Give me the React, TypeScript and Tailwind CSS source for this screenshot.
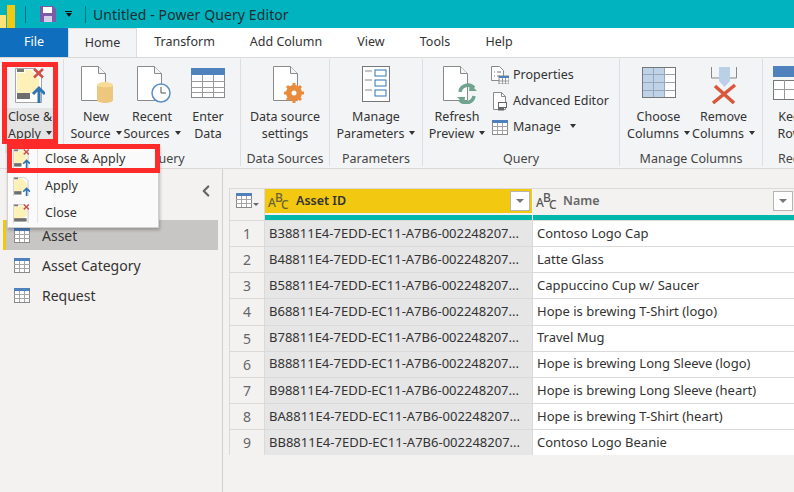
import { ChevronLeft } from 'lucide-react';

const rows = [
  ['B38811E4', 'Contoso Logo Cap'],
  ['B48811E4', 'Latte Glass'],
  ['B58811E4', 'Cappuccino Cup w/ Saucer'],
  ['B68811E4', 'Hope is brewing T-Shirt (logo)'],
  ['B78811E4', 'Travel Mug'],
  ['B88811E4', 'Hope is brewing Long Sleeve (logo)'],
  ['B98811E4', 'Hope is brewing Long Sleeve (heart)'],
  ['BA8811E4', 'Hope is brewing T-Shirt (heart)'],
  ['BB8811E4', 'Contoso Logo Beanie'],
];

function Caret() {
  return <span className="inline-block ml-[5px] mb-[3px] border-x-[3.5px] border-t-[4px] border-x-transparent border-t-[#333]" />;
}

function TableIcon() {
  return (
    <svg width="34" height="30" viewBox="0 0 34 30">
      <rect x="0.5" y="0.5" width="33" height="29" fill="#fff" stroke="#8a8a8a" />
      <rect x="0" y="0" width="34" height="7" fill="#4f81bd" />
      <path d="M11.5 7v22M22.5 7v22M0 13.5h34M0 19.5h34M0 24.5h34" stroke="#9a9a9a" fill="none" />
    </svg>
  );
}

function SmallTable() {
  return (
    <svg width="16" height="15" viewBox="0 0 16 15" className="shrink-0">
      <rect x="0.5" y="0.5" width="15" height="14" fill="#fff" stroke="#8a8a8a" />
      <rect x="0" y="0" width="16" height="3" fill="#4f81bd" />
      <path d="M5.5 3v11M10.5 3v11M0 6.5h16M0 10.5h16" stroke="#a5a5a5" fill="none" />
    </svg>
  );
}

// page with a folded corner; whatever sits on it may hang over its edge
function Doc({ children }: { children?: React.ReactNode }) {
  return (
    <svg width="36" height="38" viewBox="0 0 36 38">
      <path d="M.5 .5h17l7 7v27h-24z" fill="#fff" stroke="#8a8a8a" />
      <path d="M17.5 .5v7h7" fill="#f3f4f6" stroke="#8a8a8a" />
      {children}
    </svg>
  );
}

function CloseApplyIcon({ w = 30, close = true, apply = true }: { w?: number; close?: boolean; apply?: boolean }) {
  return (
    <svg width={w} height={(w * 35) / 30} viewBox="0 0 30 35" className="shrink-0">
      <path d="M.5 .5h20l6 6v28h-26z" fill="#fff" stroke="#a5a5a5" />
      <path d="M2 5h8v-3h6l8 9v10l-8 4h-14z" fill="#fdf1b8" />
      <rect x="2" y="1" width="7" height="3" fill="#777" />
      <rect x="2" y="25" width={apply ? 13 : 22} height="6" fill="#6e6e6e" />
      {close && <path d="M19 1l9 8.500M28 1l-9 8.500" stroke="#d1504a" strokeWidth="2.500" />}
      {apply && <path d="M24 35v-13M18 26l6-6 6 6" stroke="#2f75b5" strokeWidth="3" fill="none" />}
    </svg>
  );
}

function Big({ icon, lines, caret, w }: { icon: React.ReactNode; lines: string[]; caret?: boolean; w: string }) {
  return (
    <div className={`flex flex-col items-center ${w}`}>
      <div className="h-[42px] flex items-start justify-center">{icon}</div>
      <div className="text-center leading-[17px] whitespace-nowrap">
        <div>{lines[0]}</div>
        <div>{lines[1]}{caret && <Caret />}</div>
      </div>
    </div>
  );
}

function Group({ label, w, children, last }: { label: string; w: string; children: React.ReactNode; last?: boolean }) {
  return (
    <div className={`${w} h-[107px] flex flex-col shrink-0 ${last ? '' : 'border-r border-[#dcdfe2]'}`}>
      <div className="flex-1 flex justify-center pt-[7px] min-h-0">{children}</div>
      <div className={`leading-[17px] text-[#444] whitespace-nowrap -mb-[1px] ${last ? 'pl-[15px]' : 'text-center'}`}>{label}</div>
    </div>
  );
}

function AbcIcon({ tone }: { tone: string }) {
  return (
    <span className={`relative inline-block w-[20px] h-[18px] text-[12px] font-medium leading-none ${tone}`}>
      <span className="absolute left-0 top-[5px]">A</span>
      <span className="absolute left-[7px] top-0">B</span>
      <span className="absolute left-[13px] top-[7px]">C</span>
    </span>
  );
}

function FilterButton() {
  return (
    <span className="w-[20px] h-[20px] flex items-center justify-center bg-white border border-[#b5b5b5]">
      <span className="border-x-[4px] border-t-[4px] border-x-transparent border-t-[#777]" />
    </span>
  );
}

function PropertiesIcon() {
  return (
    <svg width="18" height="18" viewBox="0 0 18 18" className="shrink-0">
      <path d="M.5 .5h8l4 4v10h-12z" fill="#fff" stroke="#8a8a8a" />
      <path d="M3 6h1M6 6h4M3 10h1M6 10h3" stroke="#777" />
      <rect x="8" y="10" width="10" height="8" fill="#fff" stroke="#888" />
      <rect x="8" y="10" width="10" height="2" fill="#4f81bd" />
      <path d="M11.500 12v6M14.500 12v6M8 15h10" stroke="#999" />
    </svg>
  );
}

function EditorIcon() {
  return (
    <svg width="18" height="19" viewBox="0 0 18 19" className="shrink-0">
      <path d="M2.500 .5h8l4 4v13h-12z" fill="#fff" stroke="#8a8a8a" />
      <path d="M10.500 .5v4h4" fill="none" stroke="#8a8a8a" />
      <rect x="7.500" y="10.500" width="8" height="5" fill="#fff" stroke="#666" />
      <rect x="7" y="15" width="6" height="3.500" fill="#666" />
    </svg>
  );
}

export default function App() {
  return (
    <div className="relative w-[794px] h-[492px] overflow-hidden bg-[#f3f2f1] text-[12.5px] text-[#333]" style={{ fontFamily: '"Noto Sans", sans-serif' }}>
      {/* title bar */}
      <div className="h-[28px] bg-[#00b3be] flex items-center text-[#1f2d33]">
        <svg width="18" height="25" viewBox="0 0 18 25" className="shrink-0 mb-[-6px]">
          <rect x="0" y="10" width="6" height="15" fill="#fde27a" />
          <rect x="7" y="0" width="8" height="25" fill="#f2c811" />
        </svg>
        <div className="ml-[7px] w-px h-[17px] bg-[#0a6d75]" />
        <svg width="16" height="16" viewBox="0 0 16 16" className="ml-[14px]">
          <path d="M0 0h13l3 3v13h-16z" fill="#7b5aa6" />
          <rect x="3" y="1" width="9" height="6" fill="#fff" />
          <rect x="4" y="10" width="8" height="6" fill="#d9cce8" />
        </svg>
        <span className="ml-[9px] w-[7px] flex flex-col items-center">
          <span className="w-[7px] h-px bg-[#111] mb-[1px]" />
          <span className="border-x-[3.5px] border-t-[4px] border-x-transparent border-t-[#111]" />
        </span>
        <div className="ml-[13px] w-px h-[17px] bg-[#0a6d75]" />
        <span className="ml-[7px] text-[14px] tracking-[0.1px]">Untitled - Power Query Editor</span>
      </div>

      {/* tabs */}
      <div className="h-[29px] bg-white flex items-stretch text-[#333]">
        <div className="w-[68px] bg-[#106ebe] text-white flex items-center justify-center">File</div>
        <div className="w-[69px] bg-[#f3f4f6] border-x border-t border-[#dcdcdc] flex items-center justify-center">Home</div>
        <div className="w-[95px] flex items-center justify-center">Transform</div>
        <div className="w-[108px] flex items-center justify-center">Add Column</div>
        <div className="w-[62px] flex items-center justify-center">View</div>
        <div className="w-[66px] flex items-center justify-center">Tools</div>
        <div className="w-[62px] flex items-center justify-center">Help</div>
      </div>

      {/* ribbon */}
      <div className="h-[112px] bg-[#f3f4f6] border-y border-[#d9d9d9] flex items-start pt-[1px] overflow-hidden">
        <Group label="" w="w-[64px]">
          <div className="flex flex-col items-center w-[50px] h-[92px] -mt-[5px] -ml-[3px] bg-[#e4e4e4]">
            <div className="h-[47px] w-full bg-[#f3f4f6] flex justify-center pt-[7px]"><CloseApplyIcon /></div>
            <div className="leading-[17px] text-center whitespace-nowrap">
              <div>Close &amp;</div>
              <div>Apply<Caret /></div>
            </div>
          </div>
        </Group>
        <Group label="New Query" w="w-[177px]">
          <div className="flex">
            <Big w="w-[56px]" caret lines={['New', 'Source']} icon={
              <div className="ml-[6px]"><Doc><ellipse cx="24" cy="19" rx="8" ry="3" fill="#f7dc98" /><path d="M16 19v15c0 4 16 4 16 0v-15c0 3-16 3-16 0z" fill="#eec77f" /></Doc></div>
            } />
            <Big w="w-[56px]" caret lines={['Recent', 'Sources']} icon={
              <div className="ml-[6px]"><Doc><circle cx="24" cy="27" r="9" fill="#fff" stroke="#5b8fc4" strokeWidth="1.500" /><path d="M24 21v6h5" stroke="#555" fill="none" /></Doc></div>
            } />
            <Big w="w-[56px]" lines={['Enter', 'Data']} icon={<div className="pt-[2px]"><TableIcon /></div>} />
          </div>
        </Group>
        <Group label="Data Sources" w="w-[89px]">
          <Big w="w-[80px]" lines={['Data source', 'settings']} icon={
            <div className="ml-[11px]"><Doc><circle cx="21" cy="27" r="5.500" fill="none" stroke="#e98b3c" strokeWidth="5" /><path d="M21 17v20M11 27h20M14 20l14 14M28 20l-14 14" stroke="#e98b3c" strokeWidth="3" /><circle cx="21" cy="27" r="2.500" fill="#fff" /></Doc></div>
          } />
        </Group>
        <Group label="Parameters" w="w-[93px]">
          <Big w="w-[84px]" caret lines={['Manage', 'Parameters']} icon={
            <svg width="28" height="36" viewBox="0 0 28 36">
              <rect x=".5" y=".5" width="27" height="35" fill="#fff" stroke="#777" />
              <path d="M3 5h7M3 14h7M3 24h7" stroke="#888" />
              <rect x="13" y="4" width="11" height="6" fill="#fff" stroke="#2f75b5" />
              <rect x="13" y="14" width="11" height="6" fill="#fff" stroke="#2f75b5" />
              <rect x="13" y="24" width="11" height="6" fill="#fff" stroke="#2f75b5" />
            </svg>
          } />
        </Group>
        <Group label="Query" w="w-[197px]">
          <div className="flex w-full">
            <Big w="w-[68px]" caret lines={['Refresh', 'Preview']} icon={
              <div className="ml-[8px]"><Doc><path d="M17 26a8 8 0 0 1 14-4M31 30a8 8 0 0 1-14 4" stroke="#6ea58f" strokeWidth="3.500" fill="none" /><path d="M27 18l7 7h-8zM21 38l-7-7h8z" fill="#6ea58f" /></Doc></div>
            } />
            <div className="flex flex-col -mt-[4px] whitespace-nowrap">
              <div className="h-[26px] flex items-center gap-[4px]"><PropertiesIcon />Properties</div>
              <div className="h-[26px] flex items-center gap-[4px]"><EditorIcon />Advanced Editor</div>
              <div className="h-[26px] flex items-center gap-[4px]"><span className="w-[18px] flex justify-center"><SmallTable /></span>Manage<Caret /></div>
            </div>
          </div>
        </Group>
        <Group label="Manage Columns" w="w-[143px]">
          <div className="flex">
            <Big w="w-[65px]" caret lines={['Choose', 'Columns']} icon={
              <svg width="34" height="31" viewBox="0 0 34 31" className="mt-[1px]">
                <rect x=".5" y=".5" width="33" height="30" fill="#fff" stroke="#777" />
                <rect x="1" y="1" width="22" height="29" fill="#bfd3e8" />
                <path d="M11.500 1v29M22.500 1v29M1 7.500h32M1 15.500h32M1 23.500h32" stroke="#98a8b8" />
              </svg>
            } />
            <Big w="w-[65px]" caret lines={['Remove', 'Columns']} icon={
              <svg width="26" height="37" viewBox="0 0 26 37" className="mt-[1px]">
                <path d="M.5 0v11h25V0" fill="none" stroke="#888" />
                <path d="M8 0h11v14l-5.500 6-5.500-6z" fill="#b9d0e6" />
                <path d="M2 36L24 18M4 19l19 17" stroke="#d9583b" strokeWidth="3.500" />
              </svg>
            } />
          </div>
        </Group>
        <Group label="Reduce Rows" w="w-[60px]" last>
          <div className="w-full flex flex-col items-start">
            <div className="h-[42px] pl-[10px]">
              <svg width="36" height="34" viewBox="0 0 36 34">
                <rect x="0" y="0" width="36" height="11" fill="#4f81bd" />
                <rect x=".5" y="14.500" width="35" height="19" fill="#fff" stroke="#777" />
                <path d="M11.500 14v19M23.500 14v19M0 23.500h36" stroke="#999" />
              </svg>
            </div>
            <div className="ml-[8px] w-[44px] shrink-0 text-center leading-[17px]">Keep<br />Rows</div>
          </div>
        </Group>
      </div>

      {/* body */}
      <div className="flex h-[323px]">
        <div className="w-[223px] shrink-0 border-r border-[#d0d0d0] pl-[3px] pt-[51px]">
          <div className="w-[215px] h-[30px] bg-[#c8c6c4] border-l-[3px] border-[#f2c811] flex items-center gap-[12px] pl-[8px] text-[14px]"><SmallTable />Asset</div>
          <div className="h-[30px] flex items-center gap-[12px] pl-[11px] text-[14px]"><SmallTable />Asset Category</div>
          <div className="h-[30px] flex items-center gap-[12px] pl-[11px] text-[14px]"><SmallTable />Request</div>
        </div>
        <div className="flex-1 pl-[6px] pt-[19px] text-[13px]">
          <div className="border-l border-t border-[#dadada] bg-white w-[566px]">
            <div className="flex h-[31px]">
              <div className="w-[35px] shrink-0 bg-[#f3f2f1] border-r border-[#dadada] flex items-start pt-[4px] pl-[6px]">
                <SmallTable /><span className="ml-[1px] mt-[10px] border-x-[3px] border-t-[3px] border-x-transparent border-t-[#666]" />
              </div>
              <div className="w-[268px] shrink-0 flex flex-col border-r border-white">
                <div className="h-[24px] bg-[#f2c811] flex items-center pl-[3px] pr-[2px] font-semibold text-[12.5px]">
                  <AbcIcon tone="text-[#6b6238]" /><span className="ml-[8px] flex-1 text-[#333]">Asset ID</span><FilterButton />
                </div>
                <div className="h-[2px] bg-[#f3f2f1]" />
                <div className="h-[5px] bg-[#01b8aa]" />
              </div>
              <div className="flex-1 flex flex-col">
                <div className="h-[24px] bg-[#f3f2f1] flex items-center pl-[3px] pr-[2px] font-semibold text-[12.5px]">
                  <AbcIcon tone="text-[#555]" /><span className="ml-[7px] flex-1 text-[#666]">Name</span><FilterButton />
                </div>
                <div className="h-[2px] bg-[#f3f2f1]" />
                <div className="h-[5px] bg-[#01b8aa]" />
              </div>
            </div>
            {rows.map(([id, name], i) => (
              <div key={id} className="flex h-[26.14px] border-t border-[#dadada]">
                <div className="w-[35px] shrink-0 bg-[#f3f2f1] border-r border-[#dadada] flex items-center justify-center text-[14px] text-[#666]">{i + 1}</div>
                <div className="w-[268px] shrink-0 bg-[#e6e6e6] border-r border-[#dadada] pl-[4px] flex items-center whitespace-nowrap">{id}-7EDD-EC11-A7B6-002248207...</div>
                <div className="flex-1 pl-[4px] flex items-center whitespace-nowrap">{name}</div>
              </div>
            ))}
          </div>
        </div>
      </div>

      {/* collapse chevron */}
      <ChevronLeft className="absolute left-[197px] top-[182px] text-[#666]" size={18} strokeWidth={3} />

      {/* dropdown menu */}
      <div className="absolute left-[7px] top-[145px] w-[152px] h-[83px] bg-[#fafafa] border border-[#d0d0d0] shadow-[1px_2px_3px_rgba(0,0,0,0.25)]">
        <div className="absolute left-[29px] top-0 bottom-[4px] w-px bg-[#e3e3e3]" />
        <div className="h-[26px] flex items-center gap-[15px] pl-[5px]"><CloseApplyIcon w={17} />Close &amp; Apply</div>
        <div className="h-[27px] mt-[1px] flex items-center gap-[15px] pl-[5px]"><CloseApplyIcon w={17} close={false} />Apply</div>
        <div className="h-[27px] flex items-center gap-[15px] pl-[5px]"><CloseApplyIcon w={17} apply={false} />Close</div>
      </div>

      {/* red highlights */}
      <div className="absolute left-[2px] top-[62px] w-[56px] h-[82px] border-[5px] border-[#ff2a2a]" />
      <div className="absolute left-[7px] top-[144px] w-[153px] h-[29px] border-[5px] border-[#ff2a2a]" />
    </div>
  );
}
